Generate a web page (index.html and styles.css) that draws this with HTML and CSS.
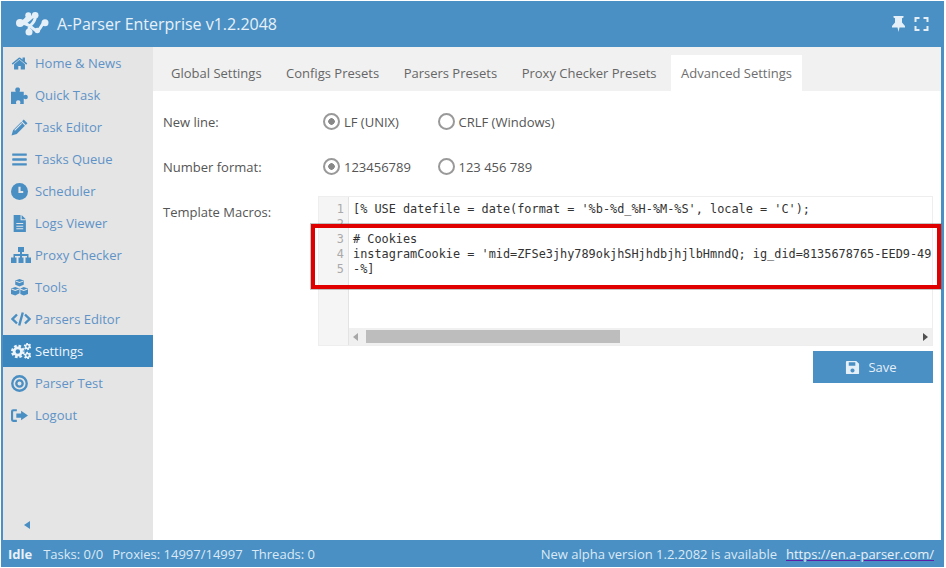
FILE: index.html
```html
<!DOCTYPE html>
<html lang="en">
<head>
<meta charset="utf-8">
<title>A-Parser Enterprise</title>
<link rel="stylesheet" href="styles.css">
</head>
<body>
<div class="app">
  <header class="topbar">
    <svg class="logo" viewBox="0 0 33 24" aria-hidden="true">
      <g fill="none" stroke="#e4eff8" stroke-width="3">
        <path d="M4 11 C9 9 11 6 12.500 3.500 M4 11 C9 11 11 12 14 14 C17 16 18 18 21 18.500 C25 18.500 25 11 29 10.700 M19 3 C20 8 17 11 14 14 C12 16 13 18 13 20 M19 3 C14 6 12 9 9 11"/>
      </g>
      <g fill="#e4eff8">
        <circle cx="4" cy="11" r="4"/><circle cx="12.300" cy="3.300" r="3"/><circle cx="19.200" cy="3.300" r="3.300"/>
        <circle cx="29" cy="10.700" r="3.500"/><circle cx="13" cy="20" r="3.500"/><circle cx="21.300" cy="18.500" r="2.800"/>
      </g>
    </svg>
    <h1 class="title">A-Parser Enterprise v1.2.2048</h1>
    <div class="top-tools">
      <svg class="pin" viewBox="0 0 13 16" aria-hidden="true"><path d="M1.500 0h10v1.500l-1.500.7v4.300l3 3.500v1.500H7.500L6.500 16 5.500 11.500H0V10l3-3.500V2.200L1.500 1.500z"/></svg>
      <svg class="full" viewBox="0 0 14 14" aria-hidden="true"><path d="M0 0h5v2H2v3H0zM9 0h5v5h-2V2H9zM0 9h2v3h3v2H0zM12 9h2v5H9v-2h3z"/></svg>
    </div>
  </header>
  <div class="middle">
    <nav class="sidebar">
      <ul class="menu">
        <li class="item"><svg class="ico" viewBox="0 0 1792 1792"><path d="M1472 992v480q0 26-19 45t-45 19h-384v-384h-256v384h-384q-26 0-45-19t-19-45v-480q0-1 .5-3t.5-3l575-474 575 474q1 2 1 6zm223-69l-62 74q-8 9-21 11h-3q-13 0-21-7l-692-577-692 577q-12 8-24 7-13-2-21-11l-62-74q-8-10-7-23.500t11-21.500l719-599q32-26 76-26t76 26l244 204v-195q0-14 9-23t23-9h192q14 0 23 9t9 23v408l219 182q10 8 11 21.500t-7 23.500z"/></svg>Home &amp; News</li>
        <li class="item"><svg class="ico" viewBox="0 0 16 16"><path d="M0 4.500h4.500C3.500 2.500 4 .5 6.300.5S9 2.500 8 4.500h4V8c1.500-1.200 3.800-.8 3.800 1.500S13.500 12 12 10.800V16H8.500c.8-1.800.3-3.500-1.700-3.500S4.300 14.200 5 16H0z"/></svg>Quick Task</li>
        <li class="item"><svg class="ico" viewBox="0 0 16 16"><path d="M12 .5l3.500 3.500-1.600 1.600-3.500-3.500zM9.600 2.900l3.500 3.500-7.700 7.700L.5 15.500l1.400-4.900z"/><path class="cut thin" d="M3.400 10.800L10 4.200"/></svg>Task Editor</li>
        <li class="item"><svg class="ico" viewBox="0 0 1792 1792"><path d="M1664 1344v128q0 26-19 45t-45 19h-1408q-26 0-45-19t-19-45v-128q0-26 19-45t45-19h1408q26 0 45 19t19 45zm0-512v128q0 26-19 45t-45 19h-1408q-26 0-45-19t-19-45v-128q0-26 19-45t45-19h1408q26 0 45 19t19 45zm0-512v128q0 26-19 45t-45 19h-1408q-26 0-45-19t-19-45v-128q0-26 19-45t45-19h1408q26 0 45 19t19 45z"/></svg>Tasks Queue</li>
        <li class="item"><svg class="ico" viewBox="0 0 16 16"><circle cx="8" cy="8" r="8"/><path class="cut" d="M8 3.500V8.500H11.500"/></svg>Scheduler</li>
        <li class="item"><svg class="ico" viewBox="0 0 16 16"><path d="M2.500 0H9v5h5v11H2.500zM10 0l4 4h-4z"/><path class="cut thin" d="M5 8h6.500M5 10.500h6.500M5 13h6.500"/></svg>Logs Viewer</li>
        <li class="item"><svg class="ico wide" viewBox="0 0 20 16"><path d="M7 0h6v5h-2v2h6.500v3.500H20V16h-5.500v-5.500h1.500V9H11v1.500h1.500V16h-5v-5.500H9V9H4v1.500h1.500V16H0v-5.500h2.500V7H9V5H7z"/></svg>Proxy Checker</li>
        <li class="item"><svg class="ico" viewBox="0 0 16 16"><path d="M8 0l4 1.500v4L8 7 4 5.500v-4zM4 7.500l4 1.500v4.500L4 15.500 0 14V9zM12 7.500L16 9v5l-4 1.500-3.200-1.500V9z"/><path class="cut thin" d="M4.500 2l3.500 1.300L11.500 2M.5 9.500L4 10.800l3.500-1.300M8.500 9.500l3.500 1.300 3.500-1.300"/></svg>Tools</li>
        <li class="item"><svg class="ico wide" viewBox="0 0 20 16"><path class="line" d="M6 3.500L1.500 8 6 12.500M14 3.500L18.500 8 14 12.500M11.800 1.500L8.200 14.500"/></svg>Parsers Editor</li>
        <li class="item active"><svg class="ico wide" viewBox="0 0 20 16"><circle class="gear-teeth" cx="6.800" cy="8.500" r="5.600"/><circle class="gear" cx="6.800" cy="8.500" r="3.700"/><circle class="gear-small-teeth" cx="16.500" cy="3.500" r="3"/><circle class="gear-small" cx="16.500" cy="3.500" r="1.900"/><circle class="gear-small-teeth" cx="16.500" cy="12.500" r="3"/><circle class="gear-small" cx="16.500" cy="12.500" r="1.900"/></svg>Settings</li>
        <li class="item"><svg class="ico" viewBox="0 0 16 16"><circle class="ring" cx="8" cy="8" r="6.800"/><circle class="ring" cx="8" cy="8" r="3"/></svg>Parser Test</li>
        <li class="item"><svg class="ico" viewBox="0 0 16 16"><path d="M5.500 2v2H2.500q-.5 0-.5.500v7q0 .5.500.5H5.500v2H2q-2 0-2-2V4q0-2 2-2zM9.500 3.500L16 8l-6.500 4.500V10H5V6h4.500z"/></svg>Logout</li>
      </ul>
      <div class="collapse"><span class="collapse-arrow"></span></div>
    </nav>
    <main class="content">
      <div class="tabs">
        <span class="tab">Global Settings</span>
        <span class="tab">Configs Presets</span>
        <span class="tab">Parsers Presets</span>
        <span class="tab">Proxy Checker Presets</span>
        <span class="tab current">Advanced Settings</span>
      </div>
      <form class="form">
        <div class="row">
          <span class="label">New line:</span>
          <span class="radio on">LF (UNIX)</span>
          <span class="radio">CRLF (Windows)</span>
        </div>
        <div class="row">
          <span class="label">Number format:</span>
          <span class="radio on">123456789</span>
          <span class="radio">123 456 789</span>
        </div>
        <div class="row-editor">
          <span class="label">Template Macros:</span>
          <div class="editor">
            <div class="gutter">1<br>2<br>3<br>4<br>5</div>
            <div class="pane">
              <pre class="code">[% USE datefile = date(format = '%b-%d_%H-%M-%S', locale = 'C');

# Cookies
instagramCookie = 'mid=ZFSe3jhy789okjhSHjhdbjhjlbHmndQ; ig_did=8135678765-EED9-49
-%]</pre>
              <div class="hscroll">
                <span class="arrow left"></span>
                <div class="track"><div class="thumb"></div></div>
                <span class="arrow right"></span>
              </div>
            </div>
          </div>
        </div>
        <div class="actions">
          <button class="save" type="button"><svg class="save-ico" viewBox="0 0 16 16"><path d="M2 1h10l3 3v10q0 1-1 1H2q-1 0-1-1V2q0-1 1-1zM4 2.500V6h7V2.500zM8 9a2.200 2.200 0 1 0 .01 0z" fill-rule="evenodd"/></svg>Save</button>
        </div>
      </form>
      <div class="highlight"></div>
    </main>
  </div>
  <footer class="status">
    <b class="idle">Idle</b>
    <span class="stat">Tasks: 0/0</span>
    <span class="stat">Proxies: 14997/14997</span>
    <span class="stat">Threads: 0</span>
    <span class="notice">New alpha version 1.2.2082 is available</span>
    <a class="site" href="#">https://en.a-parser.com/</a>
  </footer>
</div>
</body>
</html>
```

FILE: styles.css
```css
*, *::before { box-sizing: border-box; }
html, body { margin: 0; height: 100%; background: #fff; }
body { padding: 1px 2px 1px 1px; font: 13px/18px "Open Sans", sans-serif; color: #555; }

.app { height: 100%; display: flex; flex-direction: column; background: #4a90c4; padding: 0 3px 0 2px; }

.topbar { height: 46px; flex: none; display: flex; align-items: center; padding-left: 14px; margin: 0 -3px 0 -2px; padding-right: 15px; }
.logo { width: 33px; height: 24px; margin-left: 1px; }
.title { margin: 0 0 0 8px; font-size: 16px; font-weight: 400; color: #e8f1f8; }
.top-tools { margin-left: auto; display: flex; align-items: center; gap: 9px; }
.pin { width: 13px; height: 16px; fill: #e4eff8; }
.full { width: 15px; height: 14px; fill: #e4eff8; }

.middle { flex: 1; min-height: 0; display: flex; background: #fff; }

.sidebar { width: 150px; flex: none; background: #e5e5e5; display: flex; flex-direction: column; }
.menu { list-style: none; margin: 0; padding: 0; flex: 1; }
.item { height: 32px; display: flex; align-items: center; padding-left: 8px; color: #5f93c7; }
.item .ico { width: 17px; height: 17px; margin-right: 7px; flex: none; fill: #4a8fc4; }
.item .ico.wide { width: 20px; height: 16px; margin-right: 4px; }
.item .cut { fill: none; stroke: #e5e5e5; stroke-width: 2; }
.item .cut.thin { stroke-width: 1; }
.item .line { fill: none; stroke: #4a8fc4; stroke-width: 2.400; }
.item .ring { fill: none; stroke: #4a8fc4; stroke-width: 2.200; }
.item.active { background: #3b86bd; color: #eef5fa; }
.item .gear { fill: none; stroke: #eef5fa; stroke-width: 2.800; }
.item .gear-teeth { fill: none; stroke: #eef5fa; stroke-width: 2.400; stroke-dasharray: 2.600 1.800; }
.item .gear-small { fill: none; stroke: #eef5fa; stroke-width: 1.500; }
.item .gear-small-teeth { fill: none; stroke: #eef5fa; stroke-width: 1.600; stroke-dasharray: 1.700 1.450; }
.collapse { height: 31px; padding: 0 0 0 21px; display: flex; align-items: center; }
.collapse-arrow { border: 4.500px solid transparent; border-right: 6px solid #4a8fc4; border-left: 0; }

.content { flex: 1; min-width: 0; position: relative; }
.tabs { height: 44px; background: #f1f1f1; display: flex; align-items: flex-end; padding-left: 8px; gap: 4.500px; }
.tab { height: 36px; padding: 0 10px; line-height: 37px; color: #666; white-space: nowrap; }
.tab.current { background: #fff; color: #6e6e6e; }

.form { padding: 0 8px 0 10px; }
.row { height: 45px; display: flex; align-items: center; }
.row:first-child { margin-top: 8px; }
.label { width: 160px; flex: none; color: #555; }
.radio { width: 114.500px; display: flex; align-items: center; gap: 4px; white-space: nowrap; color: #555; }
.radio::before { content: ""; width: 17px; height: 17px; border-radius: 50%; border: 2px solid #999; background: #fff; flex: none; }
.radio.on::before { background: radial-gradient(circle, #888 0 3px, #fff 3.500px); }

.row-editor { display: flex; margin-top: 7px; }
.row-editor .label { width: 155px; padding-top: 7px; }
.editor { flex: 1; min-width: 0; height: 150px; border: 1px solid #eee; display: flex; }
.gutter { width: 30px; flex: none; background: #f5f5f5; border-right: 1px solid #e3e3e3; padding: 5px 4px 0 0; text-align: right; color: #aaa; font: 11.870px/15px "DejaVu Sans Mono", monospace; }
.pane { flex: 1; min-width: 0; display: flex; flex-direction: column; }
.code { flex: 1; margin: 0; padding: 5px 0 0 4px; overflow: hidden; white-space: pre; color: #333; font: 11.870px/15px "DejaVu Sans Mono", monospace; }
.hscroll { height: 17px; flex: none; background: #f0f0f0; display: flex; align-items: center; padding: 0 4px; }
.arrow { flex: none; border: 4px solid transparent; }
.arrow.left { border-right: 5px solid #a8a8a8; border-left: 0; }
.arrow.right { border-left: 5px solid #505050; border-right: 0; }
.track { flex: 1; padding-left: 8px; }
.thumb { width: 254px; height: 13px; background: #bdbdbd; }

.actions { display: flex; justify-content: flex-end; margin-top: 5px; }
.save { width: 120px; height: 32px; border: 0; background: #4a90c4; color: #e4eff8; font: 13px "Open Sans", sans-serif; display: flex; align-items: center; justify-content: center; gap: 8px; padding: 0 4px 0 0; }
.save-ico { width: 15px; height: 15px; fill: #e4eff8; }

.highlight { position: absolute; left: 158px; top: 177px; width: 630px; height: 65px; border: 4px solid #e00000; box-shadow: 0 0 0 1px rgba(90, 90, 90, .35); pointer-events: none; }

.status { height: 27px; flex: none; margin: 0 -3px 0 -2px; padding: 0 10px 0 7px; display: flex; align-items: center; color: #dbe9f4; white-space: nowrap; }
.idle { font-weight: 700; color: #e8f1f8; margin-right: 11px; }
.stat { margin-right: 9px; }
.notice { margin-left: auto; margin-right: 9px; }
.site { color: #e8f1f8; text-decoration: underline; text-decoration-color: #5b1fa8; }
```
